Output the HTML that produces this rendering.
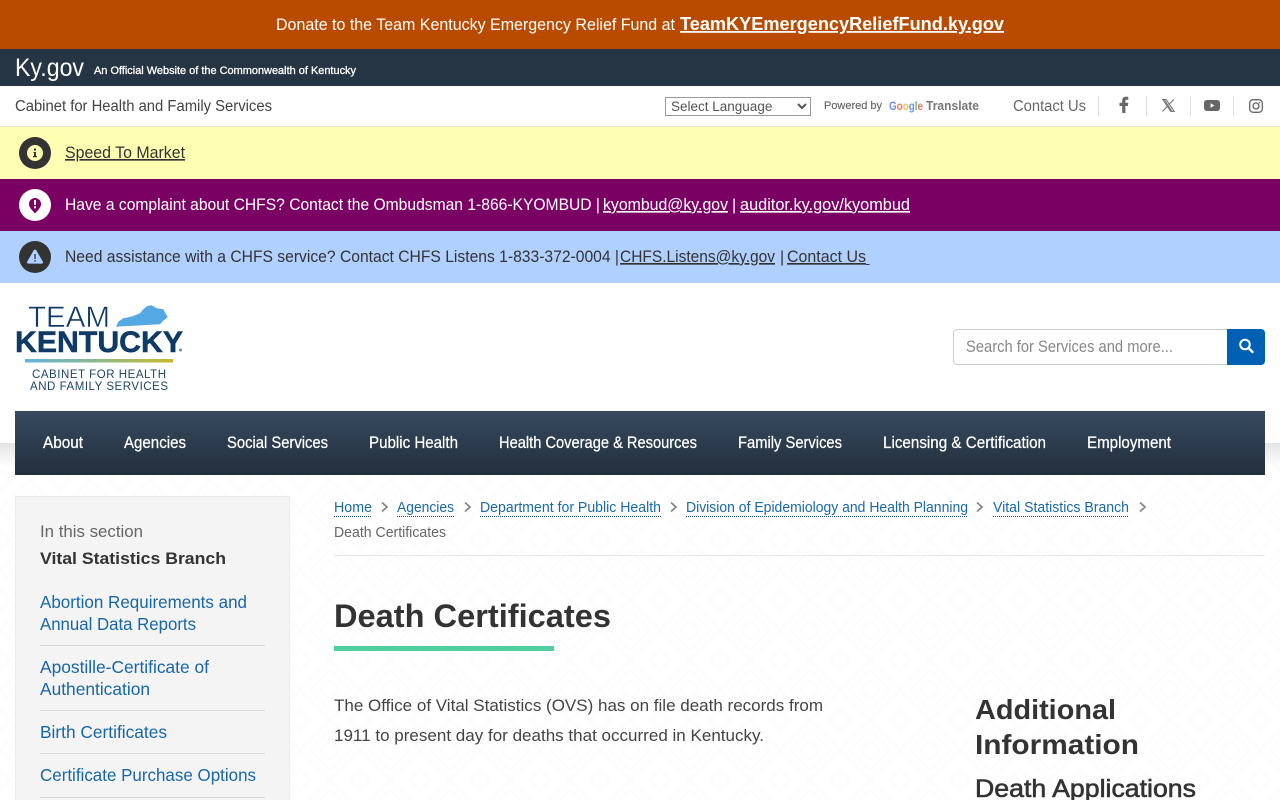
<!DOCTYPE html>
<html lang="en"><head><meta charset="utf-8"><title>Death Certificates</title>
<style>
html,body{margin:0;padding:0;width:1280px;height:800px;overflow:hidden;background:#fff}
svg.page{position:absolute;left:0;top:0;display:block}
text{font-family:"Liberation Sans",sans-serif;white-space:pre}
.u{text-decoration:underline}
.bc{font-size:14.500px;fill:#1a69a8}
.sl{font-size:17.500px;fill:#1766a6}
.n{font-size:16.500px;fill:#fff;stroke:#fff;stroke-width:.25px}
select{position:absolute;left:665px;top:97px;width:146px;height:19px;font:13.500px "Liberation Sans",sans-serif;color:#555;background:#fff;border:1px solid #999;padding:0 0 0 1px;margin:0;border-radius:0}
</style></head><body>
<svg class="page" width="1280" height="800" viewBox="0 0 1280 800" xmlns="http://www.w3.org/2000/svg">
<defs>
<pattern id="p" width="60" height="60" patternUnits="userSpaceOnUse">
<rect width="60" height="60" fill="#fff"/>
<g fill="none" stroke="#fcfcfc" stroke-width="2.500">
<path d="M0 30 30 0 60 30 30 60Z"/><path d="M10 30 30 10 50 30 30 50Z"/><path d="M20 30 30 20 40 30 30 40Z"/>
<path d="M-10 0 0-10 10 0 0 10Z M50 0 60-10 70 0 60 10Z M-10 60 0 50 10 60 0 70Z M50 60 60 50 70 60 60 70Z"/>
</g></pattern>
<linearGradient id="nav" x1="0" y1="0" x2="0" y2="1"><stop offset="0" stop-color="#364a5f"/><stop offset="1" stop-color="#232f3d"/></linearGradient>
<linearGradient id="sh" x1="0" y1="0" x2="0" y2="1"><stop offset="0" stop-color="#e4e4e4"/><stop offset="1" stop-color="#e4e4e4" stop-opacity="0"/></linearGradient>
<linearGradient id="lg" x1="0" y1="0" x2="1" y2="0"><stop offset="0" stop-color="#62b5de"/><stop offset=".5" stop-color="#8fb98a"/><stop offset="1" stop-color="#c9b92a"/></linearGradient>
</defs>

<rect width="1280" height="800" fill="#fff"/>
<rect y="443" width="1280" height="357" fill="url(#p)"/>
<rect y="443" width="1280" height="24" fill="url(#sh)"/>

<!-- top bars -->
<rect width="1280" height="49" fill="#b84b00"/>
<text x="276" y="30" font-size="17" fill="#fff" textLength="399" lengthAdjust="spacingAndGlyphs">Donate to the Team Kentucky Emergency Relief Fund at</text>
<text x="680" y="30" font-size="18" font-weight="700" fill="#fff" class="u" textLength="324" lengthAdjust="spacingAndGlyphs">TeamKYEmergencyReliefFund.ky.gov</text>

<rect y="49" width="1280" height="37" fill="#253544"/>
<text x="15" y="76" font-size="25" fill="#fff" textLength="69" lengthAdjust="spacingAndGlyphs">Ky.gov</text>
<text x="94" y="74" font-size="11" fill="#fff" stroke="#fff" stroke-width=".3" textLength="262" lengthAdjust="spacingAndGlyphs">An Official Website of the Commonwealth of Kentucky</text>

<text x="15" y="111" font-size="15.500" fill="#444" textLength="257" lengthAdjust="spacingAndGlyphs">Cabinet for Health and Family Services</text>
<text x="824" y="109" font-size="11" fill="#666" stroke="#666" stroke-width=".15" textLength="58" lengthAdjust="spacingAndGlyphs">Powered by</text>
<text x="889" y="110" font-size="11.500" font-weight="700" textLength="34" lengthAdjust="spacingAndGlyphs"><tspan fill="#6b95e8">G</tspan><tspan fill="#e8756b">o</tspan><tspan fill="#eec04a">o</tspan><tspan fill="#6b95e8">g</tspan><tspan fill="#6cb87a">l</tspan><tspan fill="#e8756b">e</tspan></text>
<text x="926" y="110" font-size="12.500" font-weight="700" fill="#777" textLength="53" lengthAdjust="spacingAndGlyphs">Translate</text>
<text x="1013" y="111" font-size="15.500" fill="#666" textLength="73" lengthAdjust="spacingAndGlyphs">Contact Us</text>
<g fill="#ddd"><rect x="1098" y="96" width="1" height="20"/><rect x="1146" y="96" width="1" height="20"/><rect x="1190" y="96" width="1" height="20"/><rect x="1233" y="96" width="1" height="20"/></g>
<!-- facebook -->
<path d="M1122.200 113v-7h-2.700v-3.200h2.700v-2.200c0-2.500 1.500-3.800 3.700-3.800h2.400v3h-1.500c-1.100 0-1.400.6-1.400 1.300v1.700h2.900l-.4 3.200h-2.500v7z" fill="#666"/>
<!-- X -->
<path d="M1162.800 99.500h3.400l8 12h-3.400zM1173.700 99.500l-4.900 5.300M1167 106.700l-4.600 4.800M1164.500 99.800l7.200 11.300" fill="none" stroke="#777" stroke-width="1.100"/>
<!-- youtube -->
<rect x="1204" y="100" width="16" height="11" rx="3" fill="#666"/><path d="M1210.600 103.300v4.400l3.800-2.200z" fill="#fff"/>
<!-- instagram -->
<rect x="1249.700" y="99.700" width="12.600" height="12.600" rx="3.400" fill="none" stroke="#666" stroke-width="1.300"/><circle cx="1256" cy="106" r="3" fill="none" stroke="#666" stroke-width="1.300"/><circle cx="1259.500" cy="102.500" r=".8" fill="#666"/>

<!-- alerts -->
<rect y="126" width="1280" height="1" fill="#e3e3cf"/>
<rect y="127" width="1280" height="52" fill="#ffffb3"/>
<rect y="179" width="1280" height="52" fill="#7a0063"/>
<rect y="231" width="1280" height="52" fill="#b0d0ff"/>

<circle cx="35" cy="153" r="16" fill="#333"/><circle cx="35" cy="153" r="8" fill="#ffffb3"/>
<path d="M34 148.500h2v2h-2zM33.500 152h2.500v4h1v1.200h-4V156h1v-2.800h-.5z" fill="#333"/>
<circle cx="35" cy="205" r="16" fill="#fff"/>
<path d="M35 213.500c-3-3.500-6-6-6-9.500a6 6 0 0 1 12 0c0 3.500-3 6-6 9.500z" fill="#7a0063"/><rect x="34" y="200" width="2" height="5" fill="#fff"/><rect x="34" y="206.300" width="2" height="2" fill="#fff"/>
<circle cx="35" cy="257" r="16" fill="#333"/>
<path d="M35 249.500a1.500 1.500 0 0 1 1.300.8l6.500 11.300a1.300 1.300 0 0 1-1.200 2H28.400a1.300 1.300 0 0 1-1.200-2l6.500-11.300a1.500 1.500 0 0 1 1.300-.8z" fill="#b0d0ff"/><rect x="34.200" y="254" width="1.700" height="5" fill="#4a5a70"/><rect x="34.200" y="260" width="1.700" height="1.700" fill="#4a5a70"/>

<text x="65" y="158" font-size="16.500" fill="#333" class="u" textLength="120" lengthAdjust="spacingAndGlyphs">Speed To Market</text>
<text x="65" y="210" font-size="16.500" fill="#fff" textLength="535" lengthAdjust="spacingAndGlyphs">Have a complaint about CHFS? Contact the Ombudsman 1-866-KYOMBUD |</text>
<text x="603" y="210" font-size="16.500" fill="#fff" class="u" textLength="125" lengthAdjust="spacingAndGlyphs">kyombud@ky.gov</text>
<text x="732" y="210" font-size="16" fill="#fff">|</text>
<text x="740" y="210" font-size="16.500" fill="#fff" class="u" textLength="170" lengthAdjust="spacingAndGlyphs">auditor.ky.gov/kyombud</text>
<text x="65" y="262" font-size="16.500" fill="#333" textLength="554" lengthAdjust="spacingAndGlyphs">Need assistance with a CHFS service? Contact CHFS Listens 1-833-372-0004 |</text>
<text x="620" y="262" font-size="16.500" fill="#333" class="u" textLength="155" lengthAdjust="spacingAndGlyphs">CHFS.Listens@ky.gov</text>
<text x="780" y="262" font-size="16" fill="#333">|</text>
<text x="787" y="262" font-size="16.500" fill="#333" class="u" textLength="79" lengthAdjust="spacingAndGlyphs">Contact Us</text>
<rect x="866" y="264" width="3.500" height="1" fill="#333"/>

<!-- logo -->
<text x="28" y="327" font-size="30" fill="#0e3a66" stroke="#fff" stroke-width=".5" textLength="82" lengthAdjust="spacingAndGlyphs">TEAM</text>
<path d="M116 326.700 118.300 321.700 123.300 318.300 128.300 317.300 133.300 316 140 313.300 143.300 309.300 147.300 306 151.700 305.300 156.700 308.300 163.300 309.300 167.700 317.300 163.300 320.700 160 324.300 146.700 325 133.300 325.700z" fill="#54a9e4"/>
<text x="15" y="352" font-size="30" font-weight="700" fill="#0e3a66" stroke="#0e3a66" stroke-width=".5" textLength="168" lengthAdjust="spacingAndGlyphs">KENTUCKY</text>
<circle cx="180.500" cy="350" r="1.500" fill="#6d8aa5"/>
<rect x="25" y="359" width="148" height="3.500" fill="url(#lg)"/>
<text x="32" y="378" font-size="11.500" fill="#1f4568" textLength="134" lengthAdjust="spacing">CABINET FOR HEALTH</text>
<text x="30" y="390" font-size="11.500" fill="#1f4568" textLength="138" lengthAdjust="spacing">AND FAMILY SERVICES</text>

<!-- search -->
<rect x="953.500" y="329.500" width="290" height="35" rx="4" fill="#fff" stroke="#ccc"/>
<path d="M1227 329h34a4 4 0 0 1 4 4v28a4 4 0 0 1-4 4h-34z" fill="#0060b3"/>
<text x="966" y="352" font-size="16.500" fill="#888" textLength="207" lengthAdjust="spacingAndGlyphs">Search for Services and more...</text>
<circle cx="1245" cy="344.500" r="4.800" fill="none" stroke="#fff" stroke-width="2"/><path d="M1248.500 348l4 4" stroke="#fff" stroke-width="2.400" stroke-linecap="round"/>

<!-- nav -->
<rect x="15" y="411" width="1250" height="64" fill="url(#nav)"/>
<text class="n" x="43" y="448" textLength="40" lengthAdjust="spacingAndGlyphs">About</text>
<text class="n" x="124" y="448" textLength="62" lengthAdjust="spacingAndGlyphs">Agencies</text>
<text class="n" x="227" y="448" textLength="101" lengthAdjust="spacingAndGlyphs">Social Services</text>
<text class="n" x="369" y="448" textLength="89" lengthAdjust="spacingAndGlyphs">Public Health</text>
<text class="n" x="499" y="448" textLength="198" lengthAdjust="spacingAndGlyphs">Health Coverage &amp; Resources</text>
<text class="n" x="738" y="448" textLength="104" lengthAdjust="spacingAndGlyphs">Family Services</text>
<text class="n" x="883" y="448" textLength="163" lengthAdjust="spacingAndGlyphs">Licensing &amp; Certification</text>
<text class="n" x="1087" y="448" textLength="84" lengthAdjust="spacingAndGlyphs">Employment</text>

<!-- sidebar -->
<rect x="15.500" y="496.500" width="274" height="320" fill="#f4f4f4" stroke="#ececec"/>
<text x="40" y="537" font-size="17" fill="#666" textLength="103" lengthAdjust="spacingAndGlyphs">In this section</text>
<text x="40" y="564" font-size="17" font-weight="700" fill="#333" textLength="186" lengthAdjust="spacingAndGlyphs">Vital Statistics Branch</text>
<text class="sl" x="40" y="608" textLength="207" lengthAdjust="spacingAndGlyphs">Abortion Requirements and</text>
<text class="sl" x="40" y="630" textLength="156" lengthAdjust="spacingAndGlyphs">Annual Data Reports</text>
<rect x="40" y="645" width="225" height="1" fill="#d8d8d8"/>
<text class="sl" x="40" y="673" textLength="169" lengthAdjust="spacingAndGlyphs">Apostille-Certificate of</text>
<text class="sl" x="40" y="695" textLength="110" lengthAdjust="spacingAndGlyphs">Authentication</text>
<rect x="40" y="710" width="225" height="1" fill="#d8d8d8"/>
<text class="sl" x="40" y="738" textLength="127" lengthAdjust="spacingAndGlyphs">Birth Certificates</text>
<rect x="40" y="753" width="225" height="1" fill="#d8d8d8"/>
<text class="sl" x="40" y="781" textLength="216" lengthAdjust="spacingAndGlyphs">Certificate Purchase Options</text>
<rect x="40" y="797" width="225" height="1" fill="#d8d8d8"/>

<!-- breadcrumb -->
<text class="bc" x="334" y="512" textLength="38" lengthAdjust="spacingAndGlyphs">Home</text>
<text class="bc" x="397" y="512" textLength="57" lengthAdjust="spacingAndGlyphs">Agencies</text>
<text class="bc" x="480" y="512" textLength="181" lengthAdjust="spacingAndGlyphs">Department for Public Health</text>
<text class="bc" x="686" y="512" textLength="282" lengthAdjust="spacingAndGlyphs">Division of Epidemiology and Health Planning</text>
<text class="bc" x="993" y="512" textLength="136" lengthAdjust="spacingAndGlyphs">Vital Statistics Branch</text>
<g stroke="#1a4f7a" stroke-width="1" stroke-dasharray="1 1" fill="none">
<path d="M334 516.500h38M397 516.500h57M480 516.500h181M686 516.500h282M993 516.500h136"/></g>
<g stroke="#888" stroke-width="1.800" fill="none">
<path d="M382 502.500l5 4.500-5 4.500M465 502.500l5 4.500-5 4.500M671 502.500l5 4.500-5 4.500M977 502.500l5 4.500-5 4.500M1140 502.500l5 4.500-5 4.500"/></g>
<text x="334" y="537" font-size="14.500" fill="#666" textLength="112" lengthAdjust="spacingAndGlyphs">Death Certificates</text>
<rect x="334" y="555" width="931" height="1" fill="#e8e8e8"/>

<!-- main -->
<text x="334" y="627" font-size="32" font-weight="700" fill="#333" textLength="277" lengthAdjust="spacingAndGlyphs">Death Certificates</text>
<rect x="334" y="646" width="220" height="5" fill="#50cf9e"/>
<text x="334" y="711" font-size="17" fill="#444" textLength="489" lengthAdjust="spacingAndGlyphs">The Office of Vital Statistics (OVS) has on file death records from</text>
<text x="334" y="741" font-size="17" fill="#444" textLength="430" lengthAdjust="spacingAndGlyphs">1911 to present day for deaths that occurred in Kentucky.</text>
<text x="975" y="719" font-size="28" font-weight="700" fill="#333" textLength="141" lengthAdjust="spacingAndGlyphs">Additional</text>
<text x="975" y="754" font-size="28" font-weight="700" fill="#333" textLength="164" lengthAdjust="spacingAndGlyphs">Information</text>
<text x="975" y="797" font-size="25" fill="#333" stroke="#333" stroke-width=".6" textLength="221" lengthAdjust="spacingAndGlyphs">Death Applications</text>
</svg>
<select aria-label="Select Language"><option>Select Language</option></select>
</body></html>
